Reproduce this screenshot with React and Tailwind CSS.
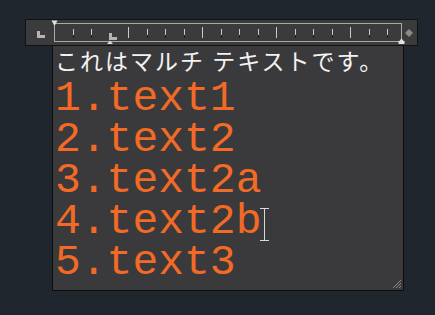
import React from 'react';

const TICKS = Array.from({ length: 18 }, (_, i) => i + 1);

function Ruler() {
  const x0 = 28;
  const step = 18.5;
  return (
    <svg width="391" height="25" viewBox="0 0 391 25" className="block">
      {/* indent marker */}
      <rect x="11" y="11" width="3" height="7" fill="#b4b4b4" />
      <rect x="11" y="15" width="8" height="3" fill="#b4b4b4" />

      {/* ruler frame */}
      <line x1="28" y1="3.5" x2="375" y2="3.5" stroke="#a9a9a9" />
      <line x1="28" y1="21.5" x2="375" y2="21.5" stroke="#a9a9a9" />
      <line x1="28.5" y1="3" x2="28.5" y2="22" stroke="#a9a9a9" />
      <line x1="375.5" y1="3" x2="375.5" y2="22" stroke="#a9a9a9" />

      {TICKS.map((k) => {
        if (k === 3) return null;
        const x = Math.round(x0 + step * k) + 0.5;
        const big = k % 4 === 0;
        return (
          <g key={k}>
            <line x1={x} y1={big ? 7 : 9} x2={x} y2={big ? 18 : 15} stroke="#c9c9c9" />
            {!big && <line x1={x} y1="15" x2={x} y2="18" stroke="#1c1c1c" />}
          </g>
        );
      })}

      {/* tab stop */}
      <rect x="83" y="13" width="3" height="7" fill="#b4b4b4" />
      <rect x="83" y="17" width="8" height="3" fill="#b4b4b4" />
      <polygon points="81,24 87,24 84,20.5" fill="#d6d6d6" />

      {/* first line indent */}
      <polygon points="25.5,0.5 31.5,0.5 28.5,6" fill="#e0e0e0" />

      {/* right margin */}
      <polygon points="372.5,22 378.5,22 375.5,18.5" fill="#e0e0e0" />
      <rect x="372.5" y="21" width="6" height="3" fill="#e0e0e0" />

      {/* width handle */}
      <polygon points="383,9 387,13 383,17 379,13" fill="#8a8a8a" />
    </svg>
  );
}

export default function App() {
  return (
    <div className="w-[435px] h-[315px] bg-[#20262e] pt-[19px]">
      <div className="ml-[25px] w-[393px] h-[27px] border border-[#101214] bg-[#3b3b3b]">
        <Ruler />
      </div>

      <div className="relative ml-[52px] w-[352px] h-[245px] border-x border-b border-[#0c0d0e] bg-[#3a3a3c]">
        <div className="pl-[2px] text-[23px] leading-[28px] tracking-[2px] text-[#f2f2f2] whitespace-pre" style={{ fontFamily: '"Noto Sans CJK JP", "Noto Sans", sans-serif' }}>
          これはマルチ テキストです。
        </div>
        <div className="mt-[4px] pl-[2px] text-[43px] leading-[41px] text-[#f26a25]" style={{ fontFamily: '"Liberation Mono", "Courier New", monospace' }}>
          <div>1.text1</div>
          <div>2.text2</div>
          <div>3.text2a</div>
          <div>4.text2b</div>
          <div>5.text3</div>
        </div>

        {/* text cursor */}
        <svg width="9" height="33" viewBox="0 0 9 33" className="absolute left-[207px] top-[162px]">
          <line x1="0" y1="0.5" x2="9" y2="0.5" stroke="#d8d8d8" />
          <line x1="0" y1="32.5" x2="9" y2="32.5" stroke="#d8d8d8" />
          <line x1="4.5" y1="0" x2="4.5" y2="33" stroke="#d8d8d8" />
        </svg>

        {/* resize grip */}
        <svg width="10" height="10" viewBox="0 0 10 10" className="absolute right-[1px] bottom-[1px]">
          <line x1="1" y1="9" x2="9" y2="1" stroke="#8c8c8c" />
          <line x1="4" y1="9" x2="9" y2="4" stroke="#8c8c8c" />
          <line x1="7" y1="9" x2="9" y2="7" stroke="#8c8c8c" />
        </svg>
      </div>
    </div>
  );
}
